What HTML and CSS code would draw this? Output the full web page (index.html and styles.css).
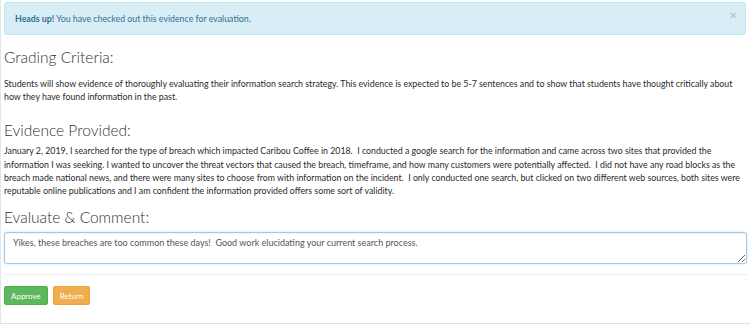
FILE: index.html
```html
<!DOCTYPE html>
<html>
<head>
<meta charset="utf-8">
<link rel="stylesheet" href="styles.css">
</head>
<body>
<div class="page">
  <div class="alert">
    <span><strong>Heads up!</strong> You have checked out this evidence for evaluation.</span>
    <span class="close">×</span>
  </div>
  <h3 class="h-criteria">Grading Criteria:</h3>
  <p class="p-criteria">Students will show evidence of thoroughly evaluating their information search strategy. This evidence is expected to be 5-7 sentences and to show that students have thought critically about<br>how they have found information in the past.</p>
  <h3 class="h-evidence">Evidence Provided:</h3>
  <p class="p-evidence">January 2, 2019, I searched for the type of breach which impacted Caribou Coffee in 2018.&nbsp; I conducted a google search for the information and came across two sites that provided the<br>information I was seeking. I wanted to uncover the threat vectors that caused the breach, timeframe, and how many customers were potentially affected.&nbsp; I did not have any road blocks as the<br>breach made national news, and there were many sites to choose from with information on the incident.&nbsp; I only conducted one search, but clicked on two different web sources, both sites were<br>reputable online publications and I am confident the information provided offers some sort of validity.</p>
  <h3 class="h-comment">Evaluate &amp; Comment:</h3>
  <textarea class="comment">Yikes, these breaches are too common these days!  Good work elucidating your current search process.</textarea>
  <hr>
  <div class="actions">
    <button class="btn approve">Approve</button>
    <button class="btn return">Return</button>
  </div>
</div>
</body>
</html>
```
FILE: styles.css
```css
html, body { margin: 0; padding: 0; background: #fff; }
body {
  font-family: Lato, "Open Sans", sans-serif;
  font-size: 8.8px;
  line-height: 13.2px;
  color: #2a2a2a;
}
.page {
  padding: 2px 3px 0 3px;
  border-left: 1px solid #e6e6e6;
  border-bottom: 1px solid #e0e0e0;
  height: 324px;
  box-sizing: border-box;
  width: 750px;
}
.alert {
  display: flex;
  justify-content: space-between;
  align-items: center;
  background: #d9edf7;
  border: 1px solid #bce8f1;
  border-radius: 3px;
  color: #31708f;
  padding: 0 10px 0 10px;
  height: 33px;
  box-sizing: border-box;
  margin-right: 1px;
}
.alert strong { font-weight: 700; }
.close {
  color: #a9bcc6;
  font-size: 13px;
  margin-top: -5px;
  margin-right: -2px;
}
h3 {
  font-family: Lato, sans-serif;
  font-weight: 300;
  font-size: 15.5px;
  line-height: 20px;
  color: #333;
  margin: 0;
}
p { margin: 0; }
.h-criteria { margin-top: 12px; }
.p-criteria { margin-top: 10px; }
.h-evidence { margin-top: 17px; }
.p-evidence { margin-top: 4px; }
.h-comment { margin-top: 10px; }
.comment {
  display: block;
  width: 100%;
  box-sizing: border-box;
  height: 32px;
  margin-top: 5px;
  border: 1px solid #9fcbee;
  border-radius: 3px;
  box-shadow: inset 0 1px 1px rgba(0,0,0,.05), 0 0 3px rgba(102,175,233,.35);
  font-family: Lato, sans-serif;
  font-size: 9px;
  line-height: 13px;
  color: #555;
  padding: 3px 8px;
  resize: vertical;
  outline: none;
}
hr {
  border: 0;
  border-top: 1px solid #eee;
  margin: 10px 0 11px 0;
}
.actions { display: flex; gap: 5px; }
.btn {
  font-family: Lato, sans-serif;
  font-size: 8px;
  color: #fff;
  border-radius: 2px;
  height: 19px;
  padding: 0 6px;
  border: 1px solid transparent;
}
.approve { background: #5cb85c; border-color: #4cae4c; }
.return { background: #f0ad4e; border-color: #eea236; }
```
